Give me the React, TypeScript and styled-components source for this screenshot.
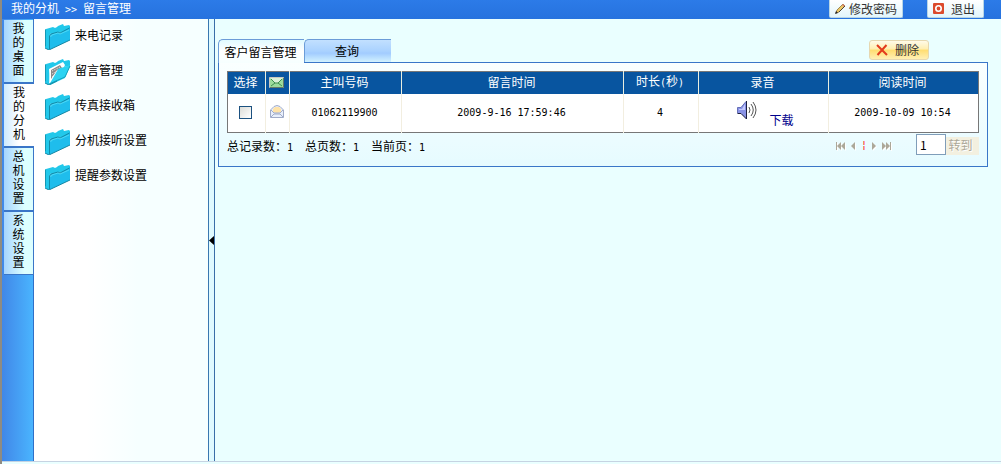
import React from 'react';
import styled, { createGlobalStyle } from 'styled-components';

const GlobalStyle = createGlobalStyle`
  * { box-sizing: border-box; }
  body {
    margin: 0;
    font: 12px/16px "Noto Sans CJK SC", sans-serif;
    color: #000;
    background: #eaffff;
  }
  button, input { font: inherit; color: inherit; margin: 0; padding: 0; }
  svg { display: block; flex: none; }
`;

const Page = styled.div`
  display: flex;
  flex-direction: column;
  min-height: 100vh;
  border-left: 2px solid #8f8b82;
`;

const TopBar = styled.header`
  display: flex;
  align-items: flex-start;
  height: 19px;
  padding: 0 17px 0 9px;
  color: #fff;
  background: linear-gradient(#2c7be8, #2672de);
`;

const Crumbs = styled.nav`
  flex: 1;
  white-space: pre;
`;

const Mono = styled.span`
  font-family: "DejaVu Sans Mono", monospace;
  font-size: 10px;
`;

const TopButton = styled.button`
  display: flex;
  align-items: center;
  justify-content: space-between;
  width: ${(p: { $width: number }) => p.$width}px;
  height: 18px;
  padding: 0 5px;
  border: 1px solid #b9d6e6;
  border-top: 0;
  border-radius: 0 0 2px 2px;
  color: #333;
  background: linear-gradient(#fff, #e2f5fb);
  & + & { margin-left: 24px; padding-right: 8px; }
`;

const Body = styled.div`
  display: flex;
  flex: 1;
  border-bottom: 1px solid #c6d3e2;
  margin-bottom: 2px;
`;

const Strip = styled.nav`
  display: flex;
  flex-direction: column;
  width: 32px;
  padding: 1px 0 0 2px;
  background: linear-gradient(90deg, #4187e8, #4ab6ff);
  box-shadow: inset -1px 0 #2f70c8;
`;

const StripTab = styled.a<{ $active?: boolean }>`
  display: flex;
  justify-content: center;
  height: 64px;
  padding-top: 1px;
  border-bottom: 2px solid #3a76c8;
  border-right: ${p => (p.$active ? '0' : '1px solid #3a76c8')};
  color: #000;
  text-decoration: none;
  line-height: 14px;
  background: ${p => p.$active
    ? 'linear-gradient(90deg, #cdeaff, #fff 50%)'
    : 'linear-gradient(90deg, #a6d4ff, #dcffff 70%)'};
  &:last-child { height: 63px; border-bottom-width: 1px; }
  span { width: 12px; word-break: break-all; }
`;

const Sidebar = styled.ul`
  width: 175px;
  margin: 0;
  padding: 0 0 0 11px;
  list-style: none;
  border-right: 1px solid #3a78b0;
  background: linear-gradient(90deg, #fff 30%, #f6ffff 60%);
`;

const MenuLink = styled.a`
  display: flex;
  align-items: center;
  gap: 4px;
  height: 35px;
  color: #000;
  text-decoration: none;
  span { padding-bottom: 3px; }
`;

const Splitter = styled.button`
  display: flex;
  align-items: center;
  width: 6px;
  border: 0;
  border-right: 1px solid #3a6ea8;
  background: #dffaff;
`;

const Main = styled.main`
  flex: 1;
  min-width: 0;
  padding: 20px 13px 0 3px;
`;

const TabBar = styled.div`
  display: flex;
  align-items: flex-start;
  height: 24px;
  box-shadow: inset 0 -1px #3a76c8;
`;

const Tab = styled.button<{ $active?: boolean }>`
  width: ${p => (p.$active ? 86 : 87)}px;
  height: ${p => (p.$active ? 24 : 23)}px;
  padding-right: 2px;
  border: 0 solid #6b9cd8;
  border-width: 1px 0 0 1px;
  border-radius: 5px 0 0 0;
  white-space: nowrap;
  background: ${p => p.$active
    ? 'linear-gradient(#e0faff, #fff 50%, #f6ffff)'
    : 'linear-gradient(#c2e0ff, #aad2ff 50%, #a2ccff 60%, #d2f2ff)'};
`;

const DeleteButton = styled.button`
  display: flex;
  align-items: center;
  justify-content: space-between;
  width: 60px;
  height: 20px;
  margin: 1px 59px 0 auto;
  padding: 0 9px 0 6px;
  border: 1px solid #e6d8b0;
  border-radius: 3px;
  color: #333;
  background: linear-gradient(#fffbe8, #ffefb0 45%, #ffdd70 50%, #fff0b4);
`;

const Panel = styled.section`
  padding: 8px 8px 7px;
  border: 1px solid #3a76c8;
  border-top: 0;
  background: linear-gradient(#faffff, #e6fbff);
`;

const Grid = styled.table`
  width: 100%;
  table-layout: fixed;
  border-collapse: collapse;
  border: 1px solid #777;
  background: #fff;
`;

const HeadCell = styled.th<{ $width?: number }>`
  width: ${p => (p.$width ? p.$width + 'px' : 'auto')};
  height: 22px;
  padding: 0 2px 2px 0;
  border-right: 1px solid #e8eee0;
  color: #fff;
  background: #0855a0;
  font-weight: 400;
  white-space: nowrap;
  &:last-child { border-right-color: #777; }
  svg { position: relative; top: 1px; margin: 0 auto; }
`;

const Cell = styled.td`
  height: 39px;
  padding: 0 2px 2px 0;
  border-right: 1px solid #f2eee0;
  text-align: center;
  &:last-child { border-right-color: #777; }
  > svg { margin: 0 auto; }
`;

const Check = styled.input`
  appearance: none;
  display: block;
  width: 13px;
  height: 13px;
  margin: 2px auto 0;
  border: 1px solid #1c5180;
  background: linear-gradient(135deg, #dcdcd7, #fff);
  &:checked { background: #1c5180; }
`;

const Recording = styled.div`
  display: flex;
  justify-content: center;
  gap: 11px;
  padding: 4px 0 0 6px;
  a { margin-top: 12px; color: #00008b; text-decoration: none; }
`;

const Footer = styled.div`
  display: flex;
  align-items: flex-start;
  height: 26px;
`;

const Totals = styled.div`
  display: flex;
  flex: 1;
  gap: 12px;
  padding-top: 5px;
`;

const Pager = styled.nav`
  display: flex;
  align-items: center;
  gap: 5px;
  height: 24px;
  padding-top: 3px;
  margin-right: 24px;
`;

const PageStep = styled.button`
  border: 0;
  background: none;
`;

const PageNumber = styled(Mono)`
  margin-top: -4px;
  color: #f00;
`;

const PageInput = styled.input`
  width: 30px;
  height: 21px;
  margin-top: 1px;
  padding: 0 3px;
  border: 1px solid #7f9db9;
  background: #fff;
`;

const GoButton = styled.button`
  width: 33px;
  height: 18px;
  margin-top: 4px;
  padding: 0 4px 2px 0;
  border: 0;
  color: #aca899;
  background: #f3f0e0;
  text-shadow: 1px 1px #fff;
`;

const Folder = ({ open }: { open?: boolean }) => (
  <svg width="26" height="26" viewBox="0 0 26 26">
    <path d="M0 6 1 5l7-2 2 1 2-1 1-1 5-2 1 2 5-1 1 1v5L5 10 4 26 0 24Z" fill="#22c8ea" />
    <path d="M0 22V6l1-1v18Z" fill="#1497b4" />
    {open ? (
      <>
        <path d="M4 10 18 3l2 3-8 16-7 2Z" fill="#fff" />
        <path d="m6 11 9-5 2 3-5 2-6 9Z" fill="#888" />
        <path d="m7 12 8-4M7 15l5-3M7 18l3-3" stroke="#eee" strokeDasharray="1 1" />
        <path d="m12 12 1-2 12-4v1l-5 12L5 26H4Z" fill="#2bd3f2" />
        <path d="m4 25 16-7 5-11" fill="none" stroke="#14a0bc" />
        <path d="m0 24 4 2 8-4" fill="none" stroke="#148aa4" />
      </>
    ) : (
      <>
        <path d="m5 12 1-2 7-2 2 1 10-6v13L6 25l-2 1Z" fill="#1fbdec" />
        <path d="M4.500 25V12l1.500-2 7-2 2 1 9.500-5" fill="none" stroke="#138aa8" />
        <path d="M5.500 13 7 11l6-2 2 1 9-4" fill="none" stroke="#55def8" strokeWidth=".8" />
        <path d="m0 24 4 2 2-1 19-9" fill="none" stroke="#1487a4" />
      </>
    )}
  </svg>
);

const Envelope = ({ open }: { open?: boolean }) => open ? (
  <svg width="14" height="13" viewBox="0 0 14 13">
    <path d="M.5 5 4 1.500Q7-.5 10 1.500L13.500 5v7.500H.5Z" fill="#e8effb" stroke="#a0abc8" />
    <path d="M3 4 5 2h4l2 2v3L7 8 3 7Z" fill="#ffe3a8" />
    <path d="m1 5 3 3h6l3-3M1 12l3-3h6l3 3" fill="none" stroke="#a0abc8" />
  </svg>
) : (
  <svg width="15" height="11" viewBox="0 0 15 11">
    <path d="M.5.5h14v10H.5Z" fill="#9cdc9c" stroke="#c9c9c0" />
    <path d="M1 1h13L9 6H6Z" fill="#dcf2d8" />
    <path d="m2 2 4 4h3l4-4M2 9l4-3M13 9 9 6" fill="none" stroke="#3f8f50" />
    <path d="M1 10.500h13.500V1" fill="none" stroke="#667a66" />
  </svg>
);

const Speaker = () => (
  <svg width="21" height="20" viewBox="0 0 21 20">
    <path d="M.5 7.500H4l5-6v17l-5-5H.5Z" fill="#8a93e6" />
    <path d="M2 9h3l3-5v6H2Z" fill="#c4caff" />
    <path d="M.5 13V7.500H4l5-6" fill="none" stroke="#6670b8" />
    <path d="M9.500 1v18L4 13.500H.5" fill="none" stroke="#1c2040" />
    <path d="M12 7q2 3 0 6M14 4q4.500 6 0 12M16 2q6 8 0 16" fill="none" stroke="#555" />
  </svg>
);

const Pencil = () => (
  <svg width="11" height="11" viewBox="0 0 11 11">
    <path d="m1 10 1-3 6-6 2 2-6 6Z" fill="#ecc866" stroke="#8a7038" strokeWidth=".8" />
    <path d="m7 2 1-1 2 2-1 1Z" fill="#d98070" />
    <path d="m4 9 6-6" stroke="#4a4438" />
    <path d="m0 11 1-3 2 2Z" fill="#222" />
  </svg>
);

const Power = () => (
  <svg width="11" height="11" viewBox="0 0 11 11">
    <rect width="11" height="11" rx="1" fill="#dc4a2c" />
    <circle cx="5.500" cy="5.500" r="2.700" fill="none" stroke="#fff" strokeWidth="1.600" />
  </svg>
);

const Cross = () => (
  <svg width="12" height="12" viewBox="0 0 12 12">
    <path d="m1 1 10 10M10.500 1 1.500 11" stroke="#e33b1c" strokeWidth="2" />
  </svg>
);

const Step = ({ label, width, d }: { label: string; width: number; d: string }) => (
  <PageStep type="button" aria-label={label}>
    <svg width={width} height="9" viewBox={`0 0 ${width} 9`}>
      <path d={d} fill="#fff" transform="translate(1 1)" />
      <path d={d} fill="#aca899" />
    </svg>
  </PageStep>
);

const sections = ['我的桌面', '我的分机', '总机设置', '系统设置'];
const menu = ['来电记录', '留言管理', '传真接收箱', '分机接听设置', '提醒参数设置'];

export default function App() {
  return (
    <Page>
      <GlobalStyle />
      <TopBar>
        <Crumbs>我的分机<Mono> &gt;&gt; </Mono>留言管理</Crumbs>
        <TopButton type="button" $width={74}><Pencil />修改密码</TopButton>
        <TopButton type="button" $width={57}><Power />退出</TopButton>
      </TopBar>
      <Body>
        <Strip>
          {sections.map(name => (
            <StripTab key={name} href="#" $active={name === '我的分机'}><span>{name}</span></StripTab>
          ))}
        </Strip>
        <Sidebar>
          {menu.map(name => (
            <li key={name}><MenuLink href="#"><Folder open={name === '留言管理'} /><span>{name}</span></MenuLink></li>
          ))}
        </Sidebar>
        <Splitter type="button" aria-label="收起菜单">
          <svg width="5" height="9" viewBox="0 0 5 9"><path d="M0 4.500 5 0v9Z" /></svg>
        </Splitter>
        <Main>
          <TabBar>
            <Tab type="button" $active>客户留言管理</Tab>
            <Tab type="button">查询</Tab>
            <DeleteButton type="button"><Cross />删除</DeleteButton>
          </TabBar>
          <Panel>
            <Grid>
              <thead>
                <tr>
                  <HeadCell $width={38}>选择</HeadCell>
                  <HeadCell $width={24}><Envelope /></HeadCell>
                  <HeadCell $width={112}>主叫号码</HeadCell>
                  <HeadCell>留言时间</HeadCell>
                  <HeadCell $width={75}>时长<Mono>(</Mono>秒<Mono>)</Mono></HeadCell>
                  <HeadCell $width={130}>录音</HeadCell>
                  <HeadCell $width={150}>阅读时间</HeadCell>
                </tr>
              </thead>
              <tbody>
                <tr>
                  <Cell><Check type="checkbox" aria-label="选择" /></Cell>
                  <Cell><Envelope open /></Cell>
                  <Cell><Mono>01062119900</Mono></Cell>
                  <Cell><Mono>2009-9-16 17:59:46</Mono></Cell>
                  <Cell><Mono>4</Mono></Cell>
                  <Cell><Recording><Speaker /><a href="#">下载</a></Recording></Cell>
                  <Cell><Mono>2009-10-09 10:54</Mono></Cell>
                </tr>
              </tbody>
            </Grid>
            <Footer>
              <Totals>
                <span>总记录数：<Mono>1</Mono></span>
                <span>总页数：<Mono>1</Mono></span>
                <span>当前页：<Mono>1</Mono></span>
              </Totals>
              <Pager>
                <Step label="首页" width={10} d="M0 0h1v8H0ZM5 0v8L1 4ZM9 0v8L5 4Z" />
                <Step label="上一页" width={5} d="M4 0v8L0 4Z" />
                <PageNumber>¦</PageNumber>
                <Step label="下一页" width={5} d="M0 0v8l4-4Z" />
                <Step label="末页" width={10} d="M0 0v8l4-4ZM4 0v8l4-4ZM8 0h1v8H8Z" />
              </Pager>
              <PageInput aria-label="页码" defaultValue="1" />
              <GoButton type="button">转到</GoButton>
            </Footer>
          </Panel>
        </Main>
      </Body>
    </Page>
  );
}
